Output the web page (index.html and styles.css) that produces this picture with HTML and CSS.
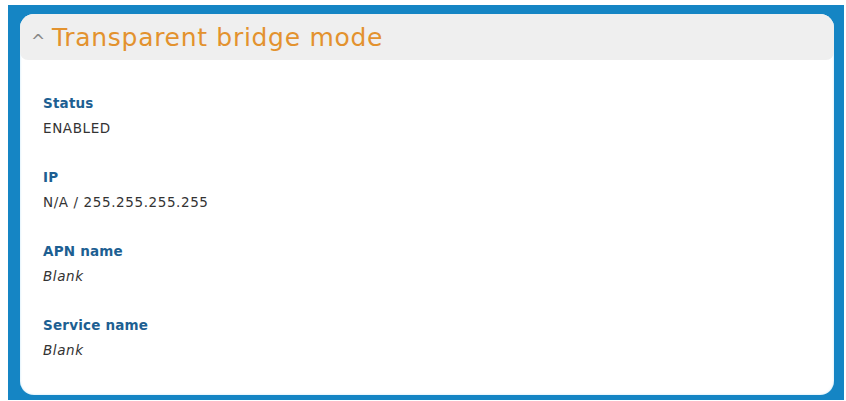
FILE: index.html
```html
<!DOCTYPE html>
<html lang="en">
<head>
<meta charset="UTF-8">
<title>Transparent bridge mode</title>
<link rel="stylesheet" href="styles.css">
</head>
<body>
<div class="frame">
  <section class="panel">
    <header class="panel-head">
      <span class="caret">^</span>
      <h2>Transparent bridge mode</h2>
    </header>
    <dl class="fields">
      <div class="field">
        <dt>Status</dt>
        <dd>ENABLED</dd>
      </div>
      <div class="field">
        <dt>IP</dt>
        <dd>N/A / 255.255.255.255</dd>
      </div>
      <div class="field">
        <dt>APN name</dt>
        <dd class="empty">Blank</dd>
      </div>
      <div class="field">
        <dt>Service name</dt>
        <dd class="empty">Blank</dd>
      </div>
    </dl>
  </section>
</div>
</body>
</html>
```

FILE: styles.css
```css
:root {
  --frame-blue: #1585c4;
  --title-orange: #e3922e;
  --label-blue: #1d5f92;
}
body { margin: 0; background: #fff; font-family: 'DejaVu Sans', Verdana, sans-serif; }
.frame {
  margin: 5px 0 0 8px;
  width: 836px;
  box-sizing: border-box;
  background: var(--frame-blue);
  padding: 9px 10px 5px 12px;
}
.panel {
  background: #fff;
  border-radius: 14px;
  height: 381px;
  box-shadow: inset 0 0 2px rgba(120,200,240,0.6);
}
.panel-head {
  display: flex;
  align-items: center;
  height: 46px;
  background: #efefef;
  border-radius: 14px 14px 8px 8px;
  padding-left: 11px;
}
.caret { color: #888; font-size: 17px; width: 21px; padding-top: 7px; }
.panel-head h2 {
  margin: 0;
  font-weight: normal;
  font-size: 25px;
  letter-spacing: 0.7px;
  color: var(--title-orange);
}
.fields { margin: 0; padding: 35px 0 0 23px; }
.field { height: 74px; }
.field dt { font-size: 13.5px; font-weight: bold; letter-spacing: 0.2px; color: var(--label-blue); line-height: 16px; }
.field dd { margin: 9px 0 0; font-size: 13.5px; letter-spacing: 0.6px; color: #333; line-height: 16px; }
.field dd.empty { font-style: italic; }
```
